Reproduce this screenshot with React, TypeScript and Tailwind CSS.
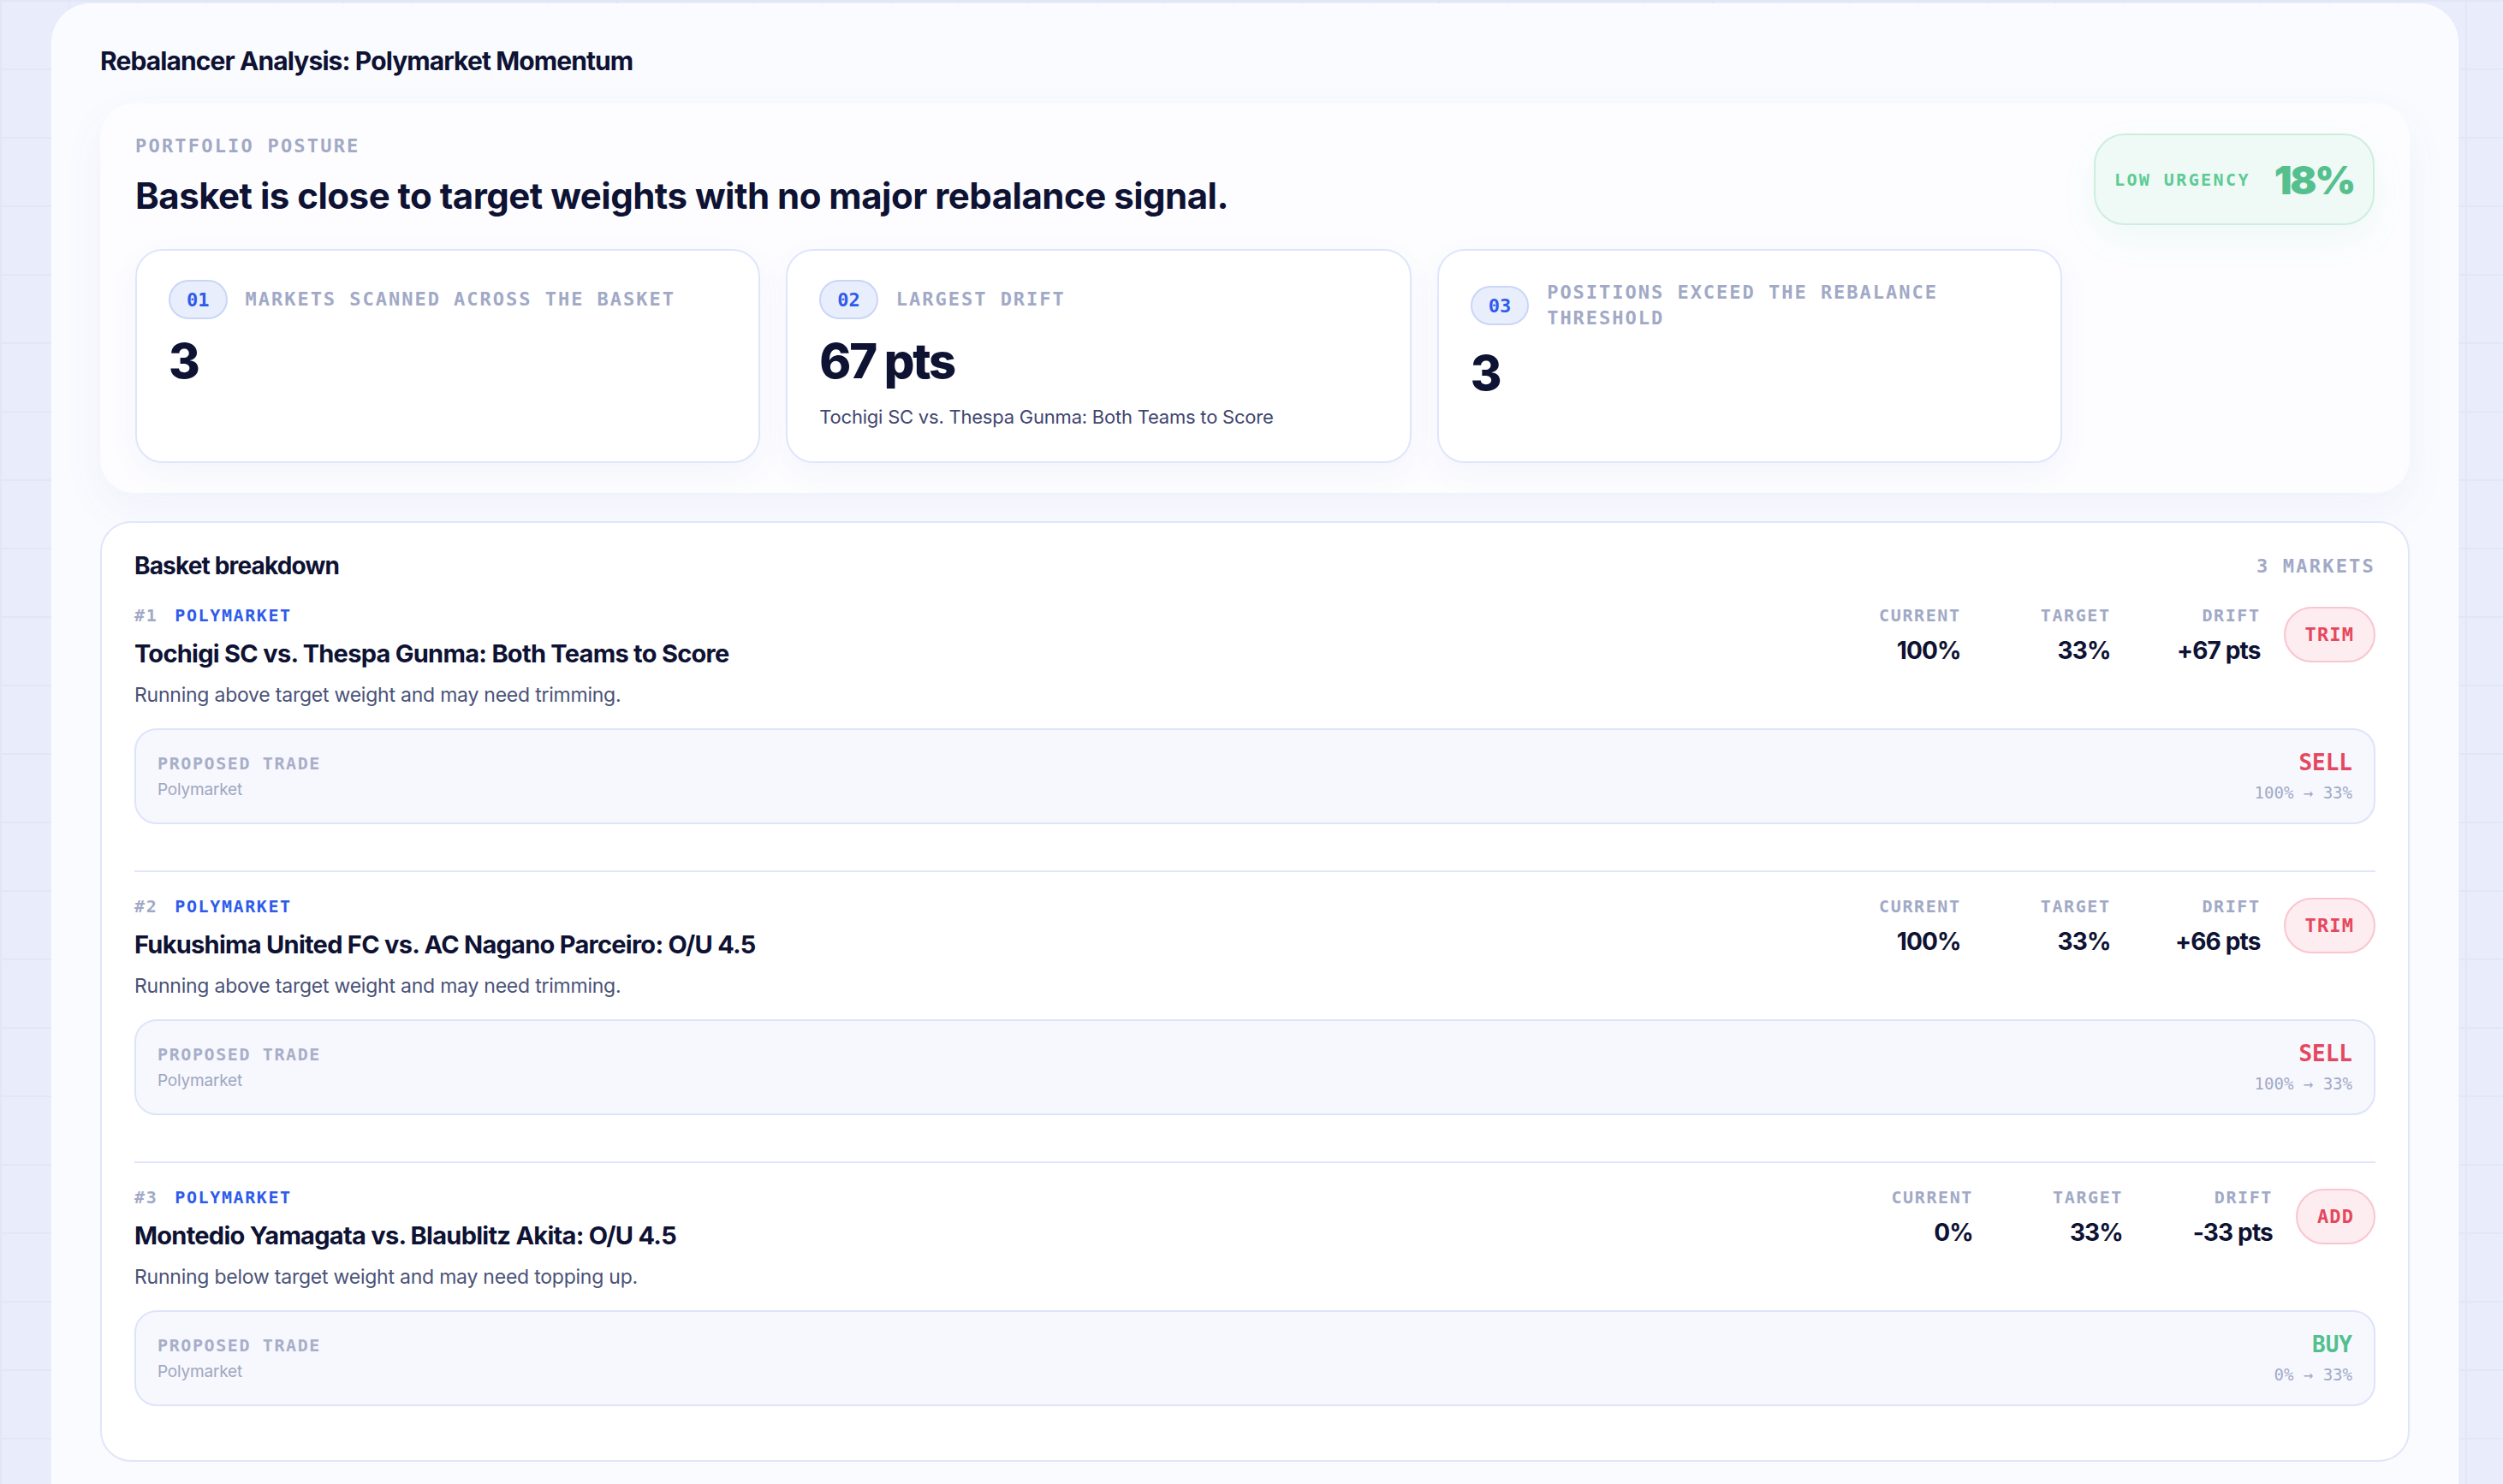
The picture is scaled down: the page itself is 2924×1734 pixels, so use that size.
import React from "react"

const mono = "font-['DejaVu_Sans_Mono',monospace]"

interface Market {
  n: number
  title: string
  note: string
  current: string
  target: string
  drift: string
  tag: string
  side: "SELL" | "BUY"
  path: string
}

const markets: Market[] = [
  {
    n: 1,
    title: "Tochigi SC vs. Thespa Gunma: Both Teams to Score",
    note: "Running above target weight and may need trimming.",
    current: "100%",
    target: "33%",
    drift: "+67 pts",
    tag: "TRIM",
    side: "SELL",
    path: "100% → 33%",
  },
  {
    n: 2,
    title: "Fukushima United FC vs. AC Nagano Parceiro: O/U 4.5",
    note: "Running above target weight and may need trimming.",
    current: "100%",
    target: "33%",
    drift: "+66 pts",
    tag: "TRIM",
    side: "SELL",
    path: "100% → 33%",
  },
  {
    n: 3,
    title: "Montedio Yamagata vs. Blaublitz Akita: O/U 4.5",
    note: "Running below target weight and may need topping up.",
    current: "0%",
    target: "33%",
    drift: "-33 pts",
    tag: "ADD",
    side: "BUY",
    path: "0% → 33%",
  },
]

interface StatCardProps {
  idx: string
  label: string
  value: string
  sub?: string
}

function StatCard({ idx, label, value, sub }: StatCardProps) {
  return (
    <div className="rounded-[32px] border-2 border-[#dfe6fb] bg-white px-[37px] pt-[34px] pb-[37px] shadow-[0_12px_34px_rgba(90,110,200,0.06)]">
      <div className="flex items-center gap-[21px]">
        <span
          className={`${mono} flex h-[46px] shrink-0 items-center rounded-full border-2 border-[#cad6f8] bg-[#e9eefd] px-[19px] text-[22px] font-bold text-[#2f5bea]`}
        >
          {idx}
        </span>
        <span className={`${mono} text-[22px] font-bold leading-[30px] tracking-[0.09em] text-[#a1a9c6]`}>
          {label}
        </span>
      </div>
      <div className="mt-[21px] text-[56px] font-extrabold leading-none tracking-[-0.04em] text-[#0e1233]">
        {value}
      </div>
      {sub && (
        <div className="mt-[22px] text-[22px] leading-[30px] tracking-[-0.01em] text-[#3f4670]">{sub}</div>
      )}
    </div>
  )
}

function MarketRow({ m, first }: { m: Market; first: boolean }) {
  const cols = [
    { label: "CURRENT", value: m.current },
    { label: "TARGET", value: m.target },
    { label: "DRIFT", value: m.drift },
  ]
  return (
    <div className={first ? "pt-[26px] pb-[27px]" : "border-t-2 border-[#e1e7fa] pt-[26px] pb-[27px]"}>
      <div className="flex items-start justify-between">
        <div>
          <div className={`${mono} flex items-center gap-[20px] text-[20px] font-bold leading-[28px] tracking-[0.08em]`}>
            <span className="text-[#a1a9c6]">#{m.n}</span>
            <span className="text-[#2f5bea]">POLYMARKET</span>
          </div>
          <div className="mt-[12px] text-[29px] font-bold leading-[38px] tracking-[-0.025em] text-[#0e1233]">
            {m.title}
          </div>
          <div className="mt-[14px] text-[23px] leading-[30px] tracking-[-0.01em] text-[#4a5278]">{m.note}</div>
        </div>
        <div className="flex items-start gap-[27px]">
          {cols.map((c) => (
            <div key={c.label} className="w-[148px] text-right">
              <div className={`${mono} text-[20px] font-bold leading-[28px] tracking-[0.08em] text-[#a1a9c6]`}>
                {c.label}
              </div>
              <div className="mt-[10px] text-[28px] font-bold leading-[34px] tracking-[-0.03em] text-[#0e1233]">
                {c.value}
              </div>
            </div>
          ))}
          <span
            className={`${mono} mt-[4px] flex h-[65px] items-center rounded-full border-2 border-[#f8c6cf] bg-[#fdedf0] px-[23px] text-[22px] font-bold tracking-[0.05em] text-[#e5475e]`}
          >
            {m.tag}
          </span>
        </div>
      </div>
      <div className="mt-[24px] flex items-center justify-between rounded-[26px] border-2 border-[#dde4fa] bg-[#f6f8fe] px-[25px] py-[22px]">
        <div>
          <div className={`${mono} text-[20px] font-bold leading-[28px] tracking-[0.08em] text-[#a8aec8]`}>
            PROPOSED TRADE
          </div>
          <div className="mt-[4px] text-[19px] leading-[26px] tracking-[-0.01em] text-[#a0a6c0]">Polymarket</div>
        </div>
        <div className="text-right">
          <div
            className={`${mono} text-[26px] font-bold leading-[32px] ${
              m.side === "SELL" ? "text-[#e5475e]" : "text-[#52c08c]"
            }`}
          >
            {m.side}
          </div>
          <div className={`${mono} mt-[6px] text-[19px] leading-[26px] text-[#a1a9c6]`}>{m.path}</div>
        </div>
      </div>
    </div>
  )
}

export default function App() {
  return (
    <div className="min-h-screen bg-[#e9edfb] bg-[linear-gradient(to_right,#e1e6f8_2px,transparent_2px),linear-gradient(to_bottom,#e1e6f8_2px,transparent_2px)] bg-size-[80px_80px] pt-[4px] pl-[60px] pr-[52px] font-['Inter','Lato',sans-serif]">
      <div className="rounded-t-[46px] border border-white/70 bg-[#fafbff] px-[56px] pt-[47px] pb-[56px]">
        <h1 className="text-[30px] font-bold leading-[38px] tracking-[-0.03em] text-[#0e1233]">
          Rebalancer Analysis: Polymarket Momentum
        </h1>

        <section className="mt-[31px] flex items-start gap-[37px] rounded-[40px] bg-[#fdfdff] px-[41px] pt-[35px] pb-[35px] shadow-[0_18px_50px_rgba(80,100,180,0.06)]">
          <div className="flex-1">
            <div className={`${mono} text-[22px] font-bold leading-[30px] tracking-[0.1em] text-[#a1a9c6]`}>
              PORTFOLIO POSTURE
            </div>
            <h2 className="mt-[16px] text-[42px] font-bold leading-[53px] tracking-[-0.012em] text-[#0e1233]">
              Basket is close to target weights with no major rebalance signal.
            </h2>
            <div className="mt-[36px] grid grid-cols-3 gap-[30px]">
              <StatCard idx="01" label="MARKETS SCANNED ACROSS THE BASKET" value="3" />
              <StatCard
                idx="02"
                label="LARGEST DRIFT"
                value="67 pts"
                sub="Tochigi SC vs. Thespa Gunma: Both Teams to Score"
              />
              <StatCard idx="03" label="POSITIONS EXCEED THE REBALANCE THRESHOLD" value="3" />
            </div>
          </div>
          <div className="flex h-[107px] w-[328px] shrink-0 items-center justify-center gap-[28px] rounded-[36px] border-2 border-[#cdeedd] bg-[#eff9f5] shadow-[0_16px_40px_rgba(82,192,140,0.08)]">
            <span className={`${mono} text-[20px] font-bold tracking-[0.12em] text-[#5ccb95]`}>LOW URGENCY</span>
            <span className="text-[46px] font-black leading-none tracking-[-0.05em] text-[#55c08e]">18%</span>
          </div>
        </section>

        <section className="mt-[33px] rounded-[36px] border-2 border-[#e0e6fa] bg-white px-[38px] pt-[32px] pb-[36px]">
          <div className="flex h-[36px] items-center justify-between">
            <h3 className="text-[28px] font-bold tracking-[-0.03em] text-[#0e1233]">Basket breakdown</h3>
            <span className={`${mono} text-[22px] font-bold tracking-[0.1em] text-[#a1a9c6]`}>3 MARKETS</span>
          </div>
          <div className="flex flex-col gap-[27px]">
            {markets.map((m, i) => (
              <MarketRow key={m.n} m={m} first={i === 0} />
            ))}
          </div>
        </section>
      </div>
    </div>
  )
}
